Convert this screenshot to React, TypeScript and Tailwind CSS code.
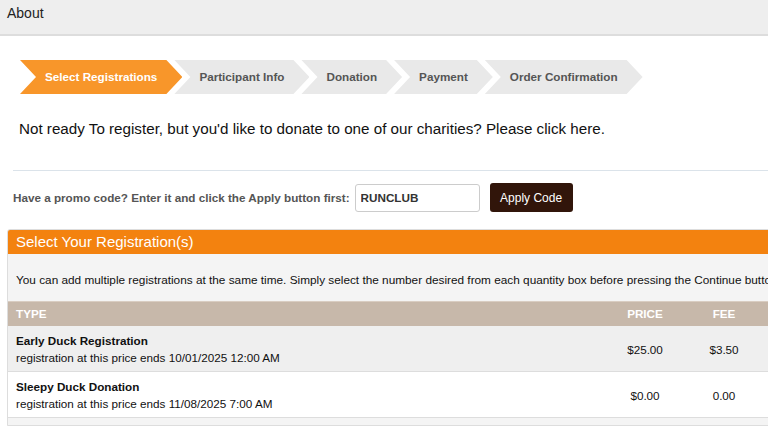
import React from "react";

const steps = [
	{ name: "Select Registrations", active: true },
	{ name: "Participant Info", active: false },
	{ name: "Donation", active: false },
	{ name: "Payment", active: false },
	{ name: "Order Confirmation", active: false },
];

const rows = [
	{
		name: "Early Duck Registration",
		note: "registration at this price ends 10/01/2025 12:00 AM",
		price: "$25.00",
		fee: "$3.50",
		bg: "bg-[#efefef]",
	},
	{
		name: "Sleepy Duck Donation",
		note: "registration at this price ends 11/08/2025 7:00 AM",
		price: "$0.00",
		fee: "0.00",
		bg: "bg-white",
	},
];

const Steps = () => {
	return (
		<div className="flex pl-[20px] mt-[24px]">
			{steps.map((step, i) => (
				<div
					key={step.name}
					className={`h-[34px] flex items-center pl-[25px] pr-[25px] text-[11.7px] font-bold [clip-path:polygon(0_0,calc(100%_-_16px)_0,100%_50%,calc(100%_-_16px)_100%,0_100%,16px_50%)] ${
						step.active ? "bg-[#f8962a] text-white" : "bg-[#e9e9e9] text-[#555555]"
					} ${i > 0 ? "-ml-[8px]" : ""}`}
				>
					{step.name}
				</div>
			))}
		</div>
	);
};

const Registrations = () => {
	return (
		<div className="ml-[7px] mt-[17px] w-[900px] border border-[#dddddd] rounded-t-[3px] bg-[#f4f4f4] pb-[7px]">
			<div className="h-[24px] bg-[#f3820f] flex items-center px-[8px] text-white text-[15px] rounded-t-[2px]">
				Select Your Registration(s)
			</div>
			<p className="px-[8px] pt-[20px] pb-[14px] text-[11.8px] leading-[13px] text-[#111] whitespace-nowrap">
				You can add multiple registrations at the same time. Simply select the number desired from each
				quantity box before pressing the Continue button to proceed.
			</p>
			<div className="grid grid-cols-[597px_80px_78px_1fr] h-[25px] items-center bg-[#c7b8aa] border-t border-[#d9cdc2] text-white text-[11.7px] font-bold">
				<div className="pl-[8px]">TYPE</div>
				<div className="text-center">PRICE</div>
				<div className="text-center">FEE</div>
				<div className="text-center">QUANTITY</div>
			</div>
			{rows.map((row) => (
				<div
					key={row.name}
					className={`grid grid-cols-[597px_80px_78px_1fr] items-center border-b border-[#dddddd] ${row.bg} text-[11.7px] text-[#111] h-[46px]`}
				>
					<div className="pl-[8px] leading-[17px]">
						<div className="font-bold">{row.name}</div>
						<div>{row.note}</div>
					</div>
					<div className="text-center pt-[2px]">{row.price}</div>
					<div className="text-center pt-[2px]">{row.fee}</div>
					<div />
				</div>
			))}
		</div>
	);
};

export default function App() {
	return (
		<div className="w-[768px] h-[431px] overflow-hidden bg-white font-['Liberation_Sans',Arial,sans-serif]">
			<div className="h-[36px] bg-[#eeeeee] border-b-2 border-[#dddddd] pl-[7px] pt-[3px] text-[14px] text-[#222]">
				About
			</div>
			<Steps />
			<div className="pl-[19px] mt-[26px] text-[15.2px] leading-[18px] text-[#111]">
				Not ready To register, but you'd like to donate to one of our charities? Please click here.
			</div>
			<div className="ml-[13px] mt-[32px] h-px bg-[#dbe3ea]" />
			<div className="flex items-center ml-[13px] mt-[12px] gap-[5px]">
				<span className="text-[11.7px] font-bold text-[#555555]">
					Have a promo code? Enter it and click the Apply button first:
				</span>
				<input
					className="w-[125px] h-[28px] border border-[#cccccc] rounded-[3px] px-[5px] text-[11.7px] font-bold text-[#333]"
					defaultValue="RUNCLUB"
				/>
				<button className="ml-[5px] w-[83px] h-[29px] bg-[#31150a] rounded-[3px] text-white text-[12px]">
					Apply Code
				</button>
			</div>
			<Registrations />
		</div>
	);
}
